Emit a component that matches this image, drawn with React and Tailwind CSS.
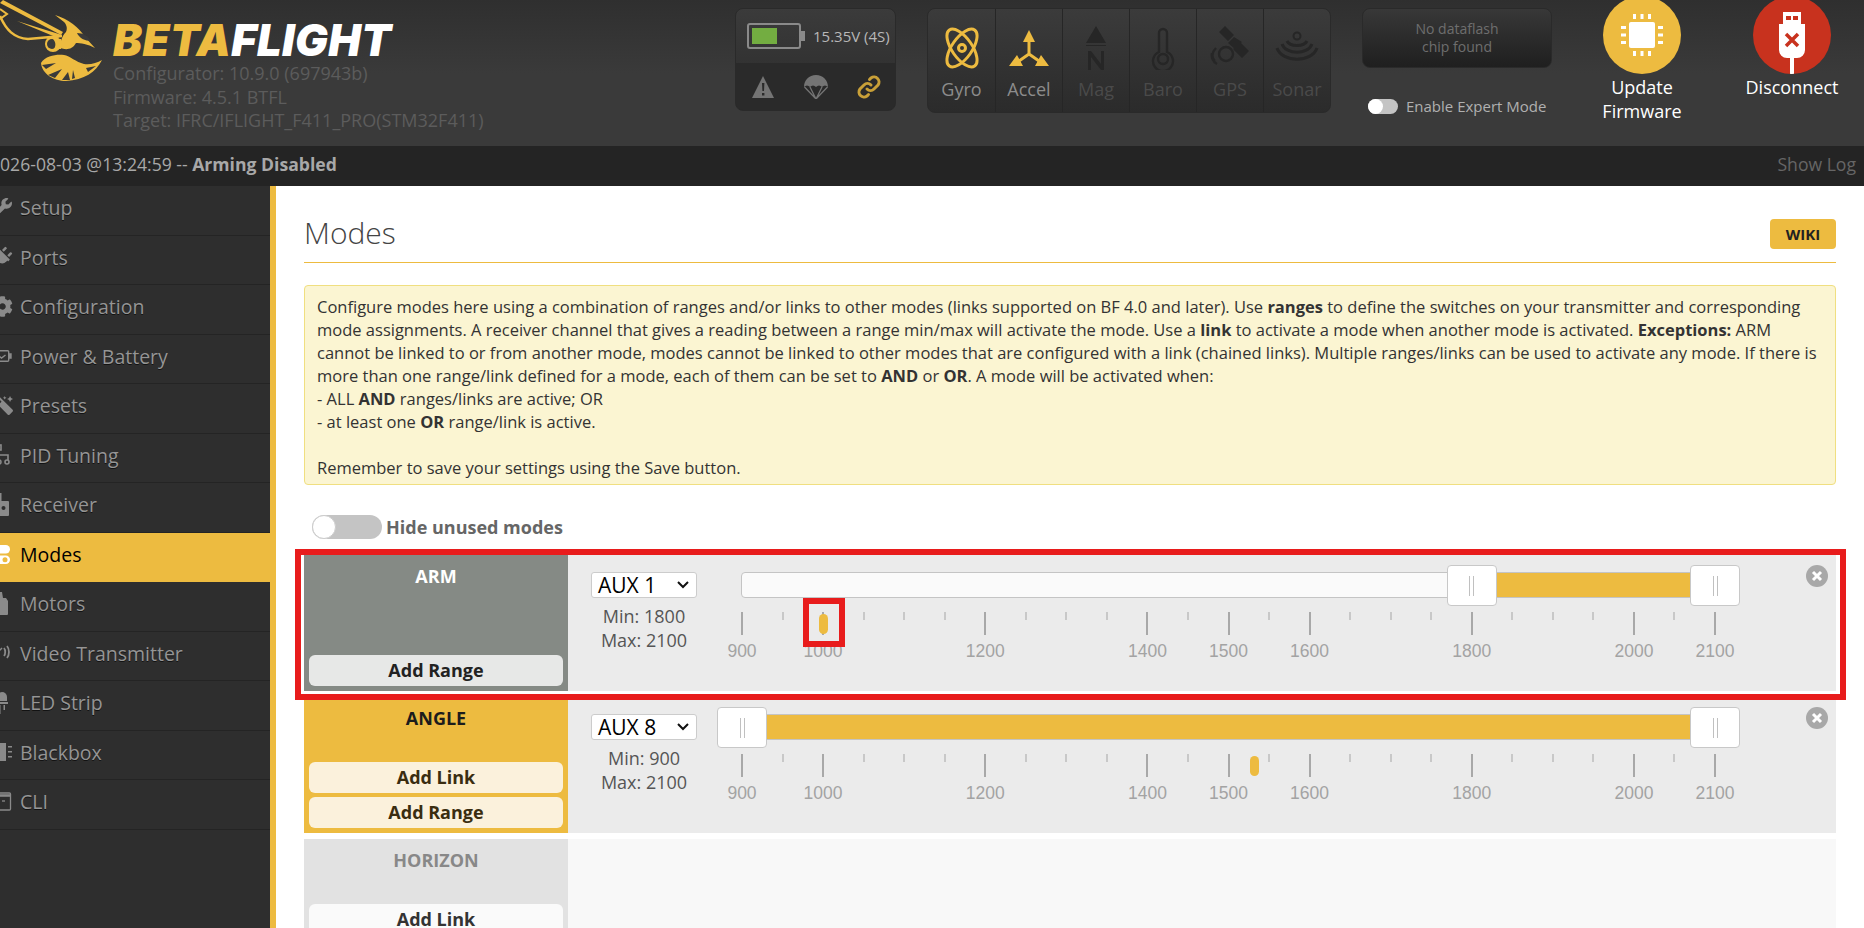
import { FaWrench, FaCog, FaMagic, FaPlug } from "react-icons/fa";

const SANS = "font-['Open_Sans',sans-serif]";

const NAV = [
  { label: "Setup", icon: <FaWrench className="w-[19px] h-[19px] -ml-[7px]" /> },
  { label: "Ports", icon: <FaPlug className="w-[20px] h-[20px] -ml-[8px] rotate-45" /> },
  { label: "Configuration", icon: <FaCog className="w-[21px] h-[21px] -ml-[8px]" /> },
  { label: "Power & Battery", icon: <BatteryGlyph /> },
  { label: "Presets", icon: <FaMagic className="w-[19px] h-[19px] -ml-[6px] -scale-x-100" /> },
  { label: "PID Tuning", icon: <PidGlyph /> },
  { label: "Receiver", icon: <RemoteGlyph /> },
  { label: "Modes", icon: <ModesGlyph />, active: true },
  { label: "Motors", icon: <MotorGlyph /> },
  { label: "Video Transmitter", icon: <VtxGlyph /> },
  { label: "LED Strip", icon: <LedGlyph /> },
  { label: "Blackbox", icon: <BlackboxGlyph /> },
  { label: "CLI", icon: <CliGlyph /> },
];

const LABELS = [900, 1000, 1200, 1400, 1500, 1600, 1800, 2000, 2100];

function pct(v) {
  return ((v - 900) / 1200) * 100;
}

function BatteryGlyph() {
  return (
    <svg viewBox="0 0 16 14" className="w-[16px] h-[14px] -ml-[4px]" fill="none" stroke="currentColor" strokeWidth="1.4">
      <rect x="0.7" y="1.7" width="12" height="10.5" rx="1" />
      <path d="M13 5h2v4h-2z" fill="currentColor" />
      <path d="M3 7l2.5 2 4-3" />
    </svg>
  );
}

function PidGlyph() {
  return (
    <svg viewBox="0 0 16 22" className="w-[16px] h-[22px] -ml-[4px]" fill="none" stroke="currentColor" strokeWidth="1.6">
      <rect x="0" y="1" width="5" height="5" />
      <path d="M3 6v5M3 11h9v5M3 11v5" />
      <circle cx="3" cy="18" r="2" />
      <circle cx="11" cy="18" r="2" />
    </svg>
  );
}

function RemoteGlyph() {
  return (
    <svg viewBox="0 0 14 24" className="w-[14px] h-[24px] -ml-[2px]">
      <path d="M2 0h1.5v8H10a1 1 0 0 1 1 1v13a1 1 0 0 1-1 1H1a1 1 0 0 1-1-1V9a1 1 0 0 1 1-1h1z" fill="currentColor" />
      <circle cx="5.5" cy="15" r="2" fill="#2e2e2e" />
    </svg>
  );
}

function ModesGlyph() {
  return (
    <svg viewBox="0 0 14 20" className="w-[14px] h-[20px]">
      <rect x="-6" y="0" width="16" height="8.5" rx="4.2" fill="#fff" />
      <rect x="-6" y="10.5" width="16" height="8.5" rx="4.2" fill="#fff" />
      <circle cx="5" cy="14.7" r="2.5" fill="#edbb40" />
    </svg>
  );
}

function MotorGlyph() {
  return (
    <svg viewBox="0 0 12 24" className="w-[12px] h-[24px] -ml-[3px]" fill="currentColor">
      <path d="M3 0h2l1 6h3l2 3v13a1 1 0 0 1-1 1H1V7l2-1z" />
    </svg>
  );
}

function VtxGlyph() {
  return (
    <svg viewBox="0 0 17 20" className="w-[17px] h-[20px] -ml-[5px]" fill="none" stroke="currentColor" strokeWidth="1.5">
      <path d="M4 8v12" strokeWidth="2" />
      <path d="M1 5l3 3 3-3" />
      <path d="M9 5c1.6 2 1.6 6 0 8M12 3c2.6 3 2.6 9 0 12" strokeWidth="1.8" />
    </svg>
  );
}

function LedGlyph() {
  return (
    <svg viewBox="0 0 12 22" className="w-[12px] h-[22px] -ml-[4px]" fill="currentColor">
      <path d="M1 9V5a5 5 0 0 1 10 0v4z" />
      <path d="M0 10h12v2H0z" />
      <path d="M3 13h1.5v9H3zM7.5 13H9v5H7.5z" />
    </svg>
  );
}

function BlackboxGlyph() {
  return (
    <svg viewBox="0 0 14 18" className="w-[14px] h-[18px] -ml-[1px]" fill="currentColor">
      <path d="M0 0h7v18H0z" />
      <path d="M9 3h4v1.6H9zM9 8h4v1.6H9zM9 13h4v1.6H9z" />
    </svg>
  );
}

function CliGlyph() {
  return (
    <svg viewBox="0 0 14 19" className="w-[14px] h-[19px] -ml-[1px]" fill="none" stroke="currentColor" strokeWidth="1.3">
      <rect x="0" y="1" width="11.5" height="17" rx="1" />
      <path d="M0 3.5h11.5" strokeWidth="2.6" />
      <path d="M3 9h3" />
    </svg>
  );
}

function Bee() {
  return (
    <svg viewBox="0 0 104 84" className="w-[104px] h-[84px]" fill="#edbb40">
      <path d="M3 0L63 32l-2 3L0 3z" />
      <path d="M0 16C6 30 14 38 28 39L62 36" fill="none" stroke="#edbb40" strokeWidth="2.5" />
      <path d="M0 9L7 14L0 19" fill="none" stroke="#edbb40" strokeWidth="2" />
      <path d="M17 21L62 35L58 38z" />
      <path d="M55 15C68 19 80 28 84 36L95 48C88 44 80 43 76 43C72 50 66 50 60 48C60 42 62 36 66 32C68 28 66 24 64 22z" />
      <path d="M77 33C83 33 88 36 91 41C85 41 79 38 77 33z" fill="#3a3a3a" />
      <circle cx="53" cy="44" r="8" />
      <circle cx="52" cy="44" r="5" fill="#3a3a3a" />
      <path d="M53 39h8v10h-7c2-3 2-7-1-10z" />
      <path d="M41 63C46 55 58 54 64 55C70 56 76 62 84 64C90 65 97 63 102 60C96 72 84 80 66 81C54 81 42 74 41 63z" />
      <path d="M42 65L56 63L46 69zM48 75L62 69L55 78zM68 72L62 80L70 80zM73 70L72 79L75 78zM86 68L96 66L88 72z" fill="#3a3a3a" />
    </svg>
  );
}

function Header() {
  return (
    <div className="h-[146px] shrink-0 flex bg-gradient-to-b from-[#2f2f2f] via-[#3a3a3a] to-[#3a3a3a] overflow-hidden relative">
      <div className="w-[735px] shrink-0 flex">
        <div className="w-[113px] shrink-0"><Bee /></div>
        <div className="flex flex-col">
          <div className="h-[62px] pt-[17px] text-[43.5px] leading-[47px] font-black italic tracking-[0.4px] font-['Inter',sans-serif]">
            <span className="text-[#edbb40]">BETA</span>
            <span className="text-white">FLIGHT</span>
          </div>
          <div className="text-[18px] leading-[23.6px] text-[#5c5c5c] whitespace-nowrap">
            <div>Configurator: 10.9.0 (697943b)</div>
            <div>Firmware: 4.5.1 BTFL</div>
            <div>Target: IFRC/IFLIGHT_F411_PRO(STM32F411)</div>
          </div>
        </div>
      </div>

      <div className="w-[161px] h-[103px] mt-2 shrink-0 rounded-lg border border-[#2a2a2a] bg-gradient-to-b from-[#3b3b3b] to-[#2b2b2b] overflow-hidden flex flex-col">
        <div className="h-[54px] flex items-center pl-[11px] gap-2">
          <svg viewBox="0 0 58 26" className="w-[58px] h-[26px] shrink-0">
            <rect x="1" y="1" width="52" height="24" rx="2" fill="none" stroke="#8a8a8a" strokeWidth="2" />
            <rect x="5" y="5" width="25" height="16" fill="#73ad41" />
            <rect x="54" y="8" width="4" height="10" fill="#8a8a8a" />
          </svg>
          <span className="text-[15px] text-[#b8b8b8] whitespace-nowrap">15.35V (4S)</span>
        </div>
        <div className="flex-1 bg-[#2a2a2a] flex items-center pl-[15px] pr-[14px] justify-between">
          <svg viewBox="0 0 24 22" className="w-[24px] h-[22px]">
            <path d="M12 0l11 22H1z" fill="#747474" />
            <path d="M11 7h2.4l-.4 8h-1.6zM11 17h2.4v2.4H11z" fill="#2a2a2a" />
          </svg>
          <svg viewBox="0 0 24 24" className="w-[24px] h-[24px]">
            <path d="M0 12C0 5 5 0 12 0s12 5 12 12c-2-2-4-2-6 0-2-2-4-2-6 0-2-2-4-2-6 0-2-2-4-2-6 0z" fill="#747474" />
            <path d="M0.500 12L12 24L23.500 12M6 12L12 24L18 12" fill="none" stroke="#747474" strokeWidth="1.3" />
          </svg>
          <svg viewBox="0 0 24 24" className="w-[24px] h-[24px]" fill="none" stroke="#c9a038" strokeWidth="3" strokeLinecap="round">
            <path d="M10 14a5 5 0 0 0 7 0l4-4a5 5 0 0 0-7-7l-1.5 1.5" />
            <path d="M14 10a5 5 0 0 0-7 0l-4 4a5 5 0 0 0 7 7l1.500-1.500" />
          </svg>
        </div>
      </div>

      <div className="w-[404px] h-[105px] mt-2 ml-[31px] shrink-0 rounded-lg border border-[#2a2a2a] bg-gradient-to-b from-[#3b3b3b] to-[#2b2b2b] overflow-hidden grid grid-cols-6">
        <Sensor label="Gyro" on>
          <svg viewBox="0 0 36 42" className="w-[36px] h-[42px]" fill="none" stroke="#edbb40" strokeWidth="3">
            <ellipse cx="18" cy="21" rx="10" ry="22" transform="rotate(-35 18 21)" />
            <ellipse cx="18" cy="21" rx="10" ry="22" transform="rotate(35 18 21)" />
            <circle cx="18" cy="21" r="3.500" />
          </svg>
        </Sensor>
        <Sensor label="Accel" on>
          <svg viewBox="0 0 40 36" className="w-[40px] h-[36px]" fill="#edbb40">
            <path d="M20 0L26 12H14z" />
            <path d="M0 36L8 25L14 36zM40 36L32 25L26 36z" />
            <path d="M20 11V24M20 24L10 31M20 24L30 31" fill="none" stroke="#edbb40" strokeWidth="3" />
          </svg>
        </Sensor>
        <Sensor label="Mag">
          <svg viewBox="0 0 22 44" className="w-[22px] h-[44px]" fill="#262626">
            <path d="M11 0l10 17H1zM1 19h20v1H1z" />
            <path d="M3 25h3l10 13V25h3v19h-3L6 31v13H3z" />
          </svg>
        </Sensor>
        <Sensor label="Baro">
          <svg viewBox="0 0 24 44" className="w-[24px] h-[44px]" fill="none" stroke="#262626" strokeWidth="2.4">
            <path d="M8 26V7a4 4 0 0 1 8 0v19a10 10 0 1 1-8 0z" />
            <circle cx="12" cy="33" r="5" />
          </svg>
        </Sensor>
        <Sensor label="GPS">
          <svg viewBox="0 0 40 44" className="w-[40px] h-[44px]" fill="#262626">
            <path d="M15 0l9 9-6 6-9-9zM30 16l9 9-7 7-9-9zM18 17l6-6 8 5-7 7z" />
            <path d="M6 22c-4 4-5 10-1 13M2 27c-1 4 1 9 5 11" fill="none" stroke="#262626" strokeWidth="2.4" />
            <circle cx="16" cy="28" r="7" fill="none" stroke="#262626" strokeWidth="2.4" />
          </svg>
        </Sensor>
        <Sensor label="Sonar">
          <svg viewBox="0 0 44 34" className="w-[44px] h-[34px]" fill="none" stroke="#262626" strokeWidth="3">
            <circle cx="22" cy="5" r="3.500" strokeWidth="2" />
            <path d="M12 10c3 6 17 6 20 0M7 13c4 11 26 11 30 0M2 17c5 15 35 15 40 0" />
          </svg>
        </Sensor>
      </div>

      <div className="w-[190px] ml-[31px] shrink-0 flex flex-col">
        <div className="h-[60px] mt-2 rounded-lg border border-[#2a2a2a] bg-gradient-to-b from-[#383838] to-[#1f1f1f] flex items-center justify-center text-center text-[14px] leading-[18px] text-[#6e6e6e]">
          No dataflash
          <br />
          chip found
        </div>
        <div className="mt-[27px] flex items-center pl-[6px] gap-2">
          <span className="w-[30px] h-[15px] shrink-0 rounded-full bg-[#c4c4c4] relative">
            <span className="absolute left-0 top-0 w-[15px] h-[15px] rounded-full bg-white" />
          </span>
          <span className="text-[15px] text-[#b0b0b0] whitespace-nowrap">Enable Expert Mode</span>
        </div>
      </div>

      <div className="w-[180px] shrink-0 flex flex-col items-center -mt-[4px]">
        <div className="w-[78px] h-[78px] rounded-full bg-[#edbb40] flex items-center justify-center">
          <svg viewBox="0 0 42 42" className="w-[42px] h-[42px]" fill="#fff">
            <rect x="8" y="8" width="26" height="26" rx="2" />
            <path d="M12 0h3v5h-3zM19.500 0h3v5h-3zM27 0h3v5h-3zM12 37h3v5h-3zM19.500 37h3v5h-3zM27 37h3v5h-3zM0 12h5v3H0zM0 19.500h5v3H0zM0 27h5v3H0zM37 12h5v3h-5zM37 19.500h5v3h-5zM37 27h5v3h-5z" />
          </svg>
        </div>
        <div className="mt-[1px] text-[18px] leading-[24px] text-white text-center">Update<br />Firmware</div>
      </div>

      <div className="w-[120px] shrink-0 flex flex-col items-center -mt-[4px]">
        <div className="w-[78px] h-[78px] rounded-full bg-[#c8321e] overflow-hidden flex justify-center">
          <svg viewBox="0 0 26 62" className="w-[26px] h-[62px] mt-[16px]">
            <path d="M4 0h18v12h4v26a8 8 0 0 1-8 8h-3v16h-4V46H8a8 8 0 0 1-8-8V12h4z" fill="#fff" />
            <path d="M7 4h5v4H7zM14 4h5v4h-5z" fill="#c8321e" />
            <path d="M7 22l12 12M19 22L7 34" stroke="#c8321e" strokeWidth="3.500" />
          </svg>
        </div>
        <div className="mt-[1px] text-[18px] leading-[24px] text-white text-center">Disconnect</div>
      </div>
    </div>
  );
}

function Sensor({ label, on, children }) {
  return (
    <div className="flex flex-col items-center border-l border-[#262626] first:border-l-0 pt-[16px]">
      <div className="h-[46px] flex items-center justify-center">{children}</div>
      <div className={`mt-[6px] text-[18px] leading-[24px] ${on ? "text-[#8c8c8c]" : "text-[#4a4a4a]"}`}>{label}</div>
    </div>
  );
}

function LogBar() {
  return (
    <div className="h-[40px] shrink-0 bg-[#242424] flex items-center justify-between pr-2 pb-[4px] text-[17.6px] overflow-hidden">
      <div className="-ml-[10px] text-[#a8a8a8] whitespace-nowrap">
        2026-08-03 @13:24:59 -- <b className="font-bold">Arming Disabled</b>
      </div>
      <div className="text-[#666]">Show Log</div>
    </div>
  );
}

function Sidebar() {
  return (
    <div className="w-[276px] shrink-0 bg-[#2e2e2e] border-r-[6px] border-[#edbb40] flex flex-col">
      {NAV.map((item) => (
        <div
          key={item.label}
          className={`h-[49.5px] shrink-0 flex items-center pb-[5px] text-[19.5px] ${
            item.active
              ? "bg-[#edbb40] text-black -mr-[6px]"
              : "text-[#959595] border-b border-[#242424] [text-shadow:0_1px_0_rgba(0,0,0,0.6)]"
          }`}
        >
          <span className={`w-[20px] shrink-0 flex items-center ${item.active ? "text-white" : "text-[#8a8a8a]"}`}>{item.icon}</span>
          <span className="whitespace-nowrap">{item.label}</span>
        </div>
      ))}
    </div>
  );
}

function Scale({ marker }) {
  const minors = [];
  for (let v = 950; v < 2100; v += 50) {
    if (!LABELS.includes(v)) minors.push(v);
  }
  return (
    <div className="relative h-[50px] mt-[14px] w-[973px] ml-[24px]">
      {minors.map((v) => (
        <span key={v} className="absolute top-0 w-[2px] h-[8px] -ml-[1px] bg-[#c8c8c8]" style={{ left: `${pct(v)}%` }} />
      ))}
      {LABELS.map((v) => (
        <span key={v} className="absolute top-0 w-[2px] h-[23px] -ml-[1px] bg-[#a8a8a8]" style={{ left: `${pct(v)}%` }} />
      ))}
      {LABELS.map((v) => (
        <span
          key={v}
          className="absolute top-[28px] -translate-x-1/2 text-[17.5px] leading-[22px] text-[#a3a3a3] font-['Liberation_Sans',sans-serif]"
          style={{ left: `${pct(v)}%` }}
        >
          {v}
        </span>
      ))}
      <span
        className="absolute top-[2px] w-[9px] h-[20px] -ml-[4.5px] rounded-full bg-[#edbb40]"
        style={{ left: `${pct(marker)}%` }}
      />
    </div>
  );
}

function Handle({ value }) {
  return (
    <div
      className="absolute -top-[8px] w-[50px] h-[41px] -ml-[25px] bg-white border border-[#c8c8c8] rounded-[4px] flex items-center justify-center gap-[3px]"
      style={{ left: `${pct(value)}%` }}
    >
      <span className="w-px h-[20px] bg-[#c0c0c0]" />
      <span className="w-px h-[20px] bg-[#c0c0c0]" />
    </div>
  );
}

function Slider({ min, max, marker }) {
  return (
    <div className="flex-1 pt-[17px]">
      <div className="ml-[23px] w-[975px] h-[26px] relative rounded-[4px] border border-[#c4c4c4] bg-[#fafafa]">
        <div
          className="absolute top-0 bottom-0 bg-[#edbb40]"
          style={{ left: `${pct(min)}%`, right: `${100 - pct(max)}%` }}
        />
        <Handle value={min} />
        <Handle value={max} />
      </div>
      <Scale marker={marker} />
    </div>
  );
}

function RemoveButton() {
  return (
    <svg viewBox="0 0 22 22" className="absolute right-[8px] top-[10px] w-[22px] h-[22px]">
      <circle cx="11" cy="11" r="11" fill="#a8a8a8" />
      <path d="M7 7l8 8M15 7l-8 8" stroke="#fff" strokeWidth="3" />
    </svg>
  );
}

function ModeRow({ name, tone, buttons, aux, min, max, marker }) {
  const tones = {
    gray: { col: "bg-[#858a85] text-white", btn: "bg-[#e7e8e7] text-[#222]" },
    yellow: { col: "bg-[#edbb40] text-[#1c1c1c]", btn: "bg-[#fbf1dc] text-[#3a2d10]" },
    idle: { col: "bg-[#e2e2e2] text-[#888]", btn: "bg-[#fafafa] text-[#333]" },
  };
  const t = tones[tone];
  return (
    <div className="flex h-[136px] shrink-0 mb-[6px]">
      <div className={`w-[264px] shrink-0 flex flex-col px-[5px] pb-[5px] ${t.col}`}>
        <div className="h-[42px] flex items-center justify-center text-[18px] font-bold">{name}</div>
        <div className="mt-auto flex flex-col gap-[4px]">
          {buttons.map((b) => (
            <div key={b} className={`h-[31px] rounded-[6px] flex items-center justify-center text-[18px] font-bold ${t.btn}`}>
              {b}
            </div>
          ))}
        </div>
      </div>
      {aux ? (
        <div className="flex-1 bg-[#ebebeb] relative flex">
          <div className="w-[127px] ml-[23px] shrink-0 pt-[17px]">
            <div className="w-[106px] h-[26px] bg-white border border-[#ccc] rounded-[3px] flex items-center justify-between pl-[6px] pr-[7px] text-[21px] leading-none text-black">
              <span>{aux}</span>
              <svg viewBox="0 0 12 8" className="w-[12px] h-[8px]" fill="none" stroke="#111" strokeWidth="2"><path d="M1 1l5 5 5-5" /></svg>
            </div>
            <div className="w-[106px] mt-[6px] text-center text-[18px] leading-[24px] text-[#555]">
              <div>Min: {min}</div>
              <div>Max: {max}</div>
            </div>
          </div>
          <div className="flex-1">
            <Slider min={min} max={max} marker={marker} />
          </div>
          <RemoveButton />
        </div>
      ) : (
        <div className="flex-1 bg-[#f8f8f8]" />
      )}
    </div>
  );
}

function Content() {
  return (
    <div className="flex-1 min-w-0 bg-white pl-[28px] pr-[28px] relative overflow-hidden text-[#4a4a4a]">
      <div className="h-[77px] flex items-end justify-between border-b border-[#edbb40] pb-[9px]">
        <h1 className="text-[30px] leading-[40px] font-light text-[#444]">Modes</h1>
        <div className="w-[66px] h-[30px] mb-[4px] rounded-[4px] bg-[#edbb40] flex items-center justify-center text-[15px] font-bold text-[#222]">WIKI</div>
      </div>
      <div className="mt-[22px] h-[200px] rounded-[4px] border border-[#f0df80] bg-[#fbf5d2] px-[12px] pt-[9px] text-[16.5px] leading-[23px] text-[#333]">
        Configure modes here using a combination of ranges and/or links to other modes (links supported on BF 4.0 and later). Use <b>ranges</b> to define the switches on your transmitter and corresponding mode assignments. A receiver channel that gives a reading between a range min/max will activate the mode. Use a <b>link</b> to activate a mode when another mode is activated. <b>Exceptions:</b> ARM cannot be linked to or from another mode, modes cannot be linked to other modes that are configured with a link (chained links). Multiple ranges/links can be used to activate any mode. If there is more than one range/link defined for a mode, each of them can be set to <b>AND</b> or <b>OR</b>. A mode will be activated when:
        <br />- ALL <b>AND</b> ranges/links are active; OR
        <br />- at least one <b>OR</b> range/link is active.
        <br />
        <br />Remember to save your settings using the Save button.
      </div>
      <div className="mt-[30px] h-[24px] pl-[8px] flex items-center gap-[4px]">
        <span className="w-[70px] h-[24px] rounded-full bg-[#c4c4c4] relative">
          <span className="absolute left-0 top-0 w-[24px] h-[24px] rounded-full bg-white border border-[#ccc]" />
        </span>
        <span className="text-[18px] font-bold text-[#666]">Hide unused modes</span>
      </div>
      <div className="mt-[16px]">
        <ModeRow name="ARM" tone="gray" buttons={["Add Range"]} aux="AUX 1" min={1800} max={2100} marker={1000} />
        <ModeRow name="ANGLE" tone="yellow" buttons={["Add Link", "Add Range"]} aux="AUX 8" min={900} max={2100} marker={1532} />
        <ModeRow name="HORIZON" tone="idle" buttons={["Add Link", "Add Range"]} />
      </div>

      {/* red callouts painted on top of the screenshot */}
      <div className="absolute left-[19px] top-[363px] w-[1551px] h-[151px] border-[6px] border-[#e81c1c]" />
      <div className="absolute left-[527px] top-[412px] w-[42px] h-[49px] border-[6px] border-[#e81c1c]" />
    </div>
  );
}

export default function App() {
  return (
    <div className={`w-[1864px] h-[928px] overflow-hidden flex flex-col ${SANS}`}>
      <Header />
      <LogBar />
      <div className="flex-1 min-h-0 flex">
        <Sidebar />
        <Content />
      </div>
    </div>
  );
}
